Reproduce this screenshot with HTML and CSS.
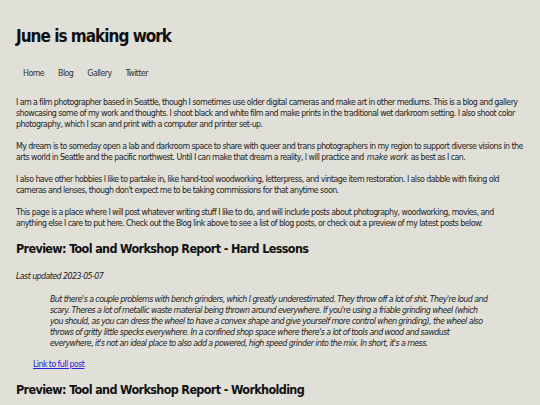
FILE: index.html
```html
<!DOCTYPE html>
<html lang="en">
<head>
<meta charset="utf-8">
<title>June is making work</title>
<link rel="stylesheet" href="styles.css">
</head>
<body>
<header class="site-header">
  <h1 class="site-title">June is making work</h1>
  <nav class="site-nav">
    <a href="#">Home</a>
    <a href="#">Blog</a>
    <a href="#">Gallery</a>
    <a href="#">Twitter</a>
  </nav>
</header>
<main class="content">
  <p>I am a film photographer based in Seattle, though I sometimes use older digital cameras and make art in other mediums. This is a blog and gallery showcasing some of my work and thoughts. I shoot black and white film and make prints in the traditional wet darkroom setting. I also shoot color photography, which I scan and print with a computer and printer set-up.</p>
  <p>My dream is to someday open a lab and darkroom space to share with queer and trans photographers in my region to support diverse visions in the arts world in Seattle and the pacific northwest. Until I can make that dream a reality, I will practice and <em class="emph">make work</em> as best as I can.</p>
  <p>I also have other hobbies I like to partake in, like hand-tool woodworking, letterpress, and vintage item restoration. I also dabble with fixing old cameras and lenses, though don't expect me to be taking commissions for that anytime soon.</p>
  <p>This page is a place where I will post whatever writing stuff I like to do, and will include posts about photography, woodworking, movies, and anything else I care to put here. Check out the Blog link above to see a list of blog posts, or check out a preview of my latest posts below:</p>

  <article class="preview">
    <h2 class="preview-title">Preview: Tool and Workshop Report - Hard Lessons</h2>
    <p class="updated">Last updated 2023-05-07</p>
    <blockquote class="excerpt">But there's a couple problems with bench grinders, which I greatly underestimated. They throw off a lot of shit. They're loud and scary. Theres a lot of metallic waste material being thrown around everywhere. If you're using a friable grinding wheel (which you should, as you can dress the wheel to have a convex shape and give yourself more control when grinding), the wheel also throws of gritty little specks everywhere. In a confined shop space where there's a lot of tools and wood and sawdust everywhere, it's not an ideal place to also add a powered, high speed grinder into the mix. In short, it's a mess.</blockquote>
    <a class="full-link" href="#">Link to full post</a>
  </article>

  <article class="preview">
    <h2 class="preview-title">Preview: Tool and Workshop Report - Workholding</h2>
  </article>
</main>
</body>
</html>
```
FILE: styles.css
```css
html {
  background: #e0dfd8;
}
body {
  margin: 0;
  padding: 0 16px;
  background: #e0dfd8;
  color: #1e1e1e;
  font-family: "DejaVu Sans Condensed", "DejaVu Sans", sans-serif;
  font-stretch: condensed;
  font-size: 8.8px;
  line-height: 11px;
  letter-spacing: -0.57px;
}
.site-header {
  display: flex;
  flex-direction: column;
}
.site-title {
  margin: 0;
  padding-top: 25px;
  font-size: 17px;
  line-height: 22px;
  letter-spacing: -1px;
  font-weight: bold;
  color: #111;
}
.site-nav {
  display: flex;
  margin-top: 21px;
  margin-bottom: 18px;
}
.site-nav a {
  padding: 0 7px;
  color: #333;
  text-decoration: none;
}
.content p {
  margin: 0 0 11px;
}
.emph {
  letter-spacing: -0.3px;
  margin: 0 1px;
}
.preview-title {
  margin: 12px 0 14px;
  font-size: 12.5px;
  line-height: 16px;
  letter-spacing: -0.65px;
  font-weight: bold;
  color: #111;
}
.content .updated {
  margin: 0 0 12px;
  font-style: italic;
}
.excerpt {
  margin: 0 34px 10px 34px;
  font-style: italic;
}
.full-link {
  display: inline-block;
  margin-left: 17px;
  color: #2222dd;
  text-decoration: underline;
}
```
